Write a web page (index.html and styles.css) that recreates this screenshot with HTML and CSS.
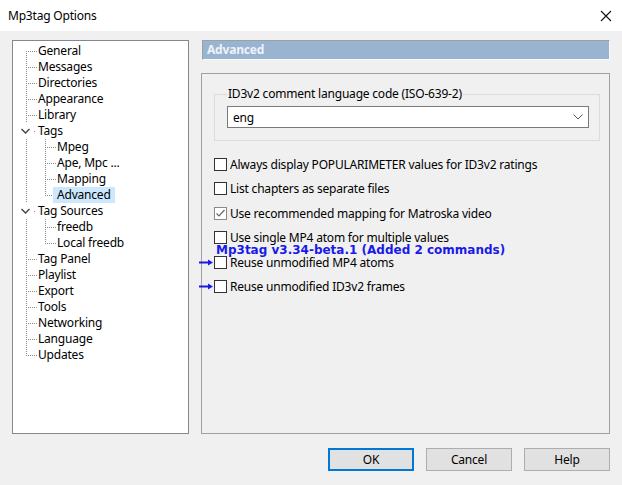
FILE: index.html
```html
<!DOCTYPE html>
<html lang="en">
<head>
    <meta charset="UTF-8">
    <title>Mp3tag Options</title>
    <link rel="stylesheet" href="styles.css">
</head>
<body>
    <div class="window">
        <div class="titlebar">
            <span class="title">Mp3tag Options</span>
            <svg class="close" width="12" height="12" viewBox="0 0 12 12">
                <path d="M1 1 L11 11 M11 1 L1 11" stroke="#111" stroke-width="1.1" fill="none"/>
            </svg>
        </div>

        <div class="client">
            <div class="main">
                <!-- tree on the left -->
                <div class="tree">
                    <div class="row"><i class="g g-first"></i><span class="item">General</span></div>
                    <div class="row"><i class="g g-tee"></i><span class="item">Messages</span></div>
                    <div class="row"><i class="g g-tee"></i><span class="item">Directories</span></div>
                    <div class="row"><i class="g g-tee"></i><span class="item">Appearance</span></div>
                    <div class="row"><i class="g g-tee"></i><span class="item">Library</span></div>
                    <div class="row">
                        <i class="g g-twisty">
                            <svg width="19" height="16" viewBox="0 0 19 16"><path d="M2.5 6 L6.5 10 L10.5 6" stroke="#444" stroke-width="1.4" fill="none"/><rect x="15" y="8" width="1" height="1" fill="#8a8a8a"/></svg>
                        </i><span class="item">Tags</span>
                    </div>
                    <div class="row"><i class="g g-line"></i><i class="g g-tee"></i><span class="item">Mpeg</span></div>
                    <div class="row"><i class="g g-line"></i><i class="g g-tee"></i><span class="item">Ape, Mpc ...</span></div>
                    <div class="row"><i class="g g-line"></i><i class="g g-tee"></i><span class="item">Mapping</span></div>
                    <div class="row"><i class="g g-line"></i><i class="g g-last"></i><span class="item selected">Advanced</span></div>
                    <div class="row">
                        <i class="g g-twisty">
                            <svg width="19" height="16" viewBox="0 0 19 16"><path d="M2.5 6 L6.5 10 L10.5 6" stroke="#444" stroke-width="1.4" fill="none"/><rect x="15" y="8" width="1" height="1" fill="#8a8a8a"/></svg>
                        </i><span class="item">Tag Sources</span>
                    </div>
                    <div class="row"><i class="g g-line"></i><i class="g g-tee"></i><span class="item">freedb</span></div>
                    <div class="row"><i class="g g-line"></i><i class="g g-last"></i><span class="item">Local freedb</span></div>
                    <div class="row"><i class="g g-tee"></i><span class="item">Tag Panel</span></div>
                    <div class="row"><i class="g g-tee"></i><span class="item">Playlist</span></div>
                    <div class="row"><i class="g g-tee"></i><span class="item">Export</span></div>
                    <div class="row"><i class="g g-tee"></i><span class="item">Tools</span></div>
                    <div class="row"><i class="g g-tee"></i><span class="item">Networking</span></div>
                    <div class="row"><i class="g g-tee"></i><span class="item">Language</span></div>
                    <div class="row"><i class="g g-last"></i><span class="item">Updates</span></div>
                </div>

                <!-- settings page -->
                <div class="page">
                    <div class="page-head">Advanced</div>
                    <div class="panel">
                        <fieldset class="group">
                            <legend>ID3v2 comment language code (ISO-639-2)</legend>
                            <div class="combo">
                                <span>eng</span>
                                <svg width="10" height="6" viewBox="0 0 10 6"><path d="M0.5 0.5 L5 5 L9.5 0.5" stroke="#555" stroke-width="1" fill="none"/></svg>
                            </div>
                        </fieldset>

                        <div class="options">
                            <div class="opt"><span class="box"></span><span class="text">Always display POPULARIMETER values for ID3v2 ratings</span></div>
                            <div class="opt"><span class="box"></span><span class="text">List chapters as separate files</span></div>
                            <div class="opt">
                                <span class="box checked"><svg width="11" height="11" viewBox="0 0 11 11"><path d="M1.5 5.5 L4 8 L9.5 2" stroke="#666" stroke-width="1.2" fill="none"/></svg></span>
                                <span class="text">Use recommended mapping for Matroska video</span>
                            </div>
                            <div class="opt"><span class="box"></span><span class="text">Use single MP4 atom for multiple values</span></div>
                            <div class="note"><span>Mp3tag v3.34-beta.1 (Added 2 commands)</span></div>
                            <div class="opt">
                                <svg class="arrow" width="15" height="7" viewBox="0 0 15 7"><path d="M0 3.5 H10" stroke="#1a1ae8" stroke-width="2"/><path d="M9 0.5 L14 3.5 L9 6.5 Z" fill="#1a1ae8"/></svg>
                                <span class="box"></span><span class="text">Reuse unmodified MP4 atoms</span>
                            </div>
                            <div class="opt">
                                <svg class="arrow" width="15" height="7" viewBox="0 0 15 7"><path d="M0 3.5 H10" stroke="#1a1ae8" stroke-width="2"/><path d="M9 0.5 L14 3.5 L9 6.5 Z" fill="#1a1ae8"/></svg>
                                <span class="box"></span><span class="text">Reuse unmodified ID3v2 frames</span>
                            </div>
                        </div>
                    </div>
                </div>
            </div>

            <div class="buttons">
                <button type="button" class="btn default">OK</button>
                <button type="button" class="btn">Cancel</button>
                <button type="button" class="btn">Help</button>
            </div>
        </div>
    </div>
</body>
</html>
```

FILE: styles.css
```css
body {
    margin: 0;
    font-family: "Noto Sans", "Open Sans", sans-serif;
    font-size: 12px;
    letter-spacing: -0.2px;
    color: #000;
    background-color: #f0f0f0;
}
.window {
    width: 622px;
    height: 485px;
    background-color: #f0f0f0;
}
.titlebar {
    height: 31px;
    background-color: white;
    display: flex;
    align-items: center;
    justify-content: space-between;
    padding: 0 10px 0 8px;
    box-sizing: border-box;
}
.title {
    font-size: 12px;
    margin-top: -1px;
}
.client {
    padding: 9px 12px 0 12px;
}
.main {
    display: flex;
    gap: 12px;
    height: 394px;
}

/* tree */
.tree {
    width: 177px;
    box-sizing: border-box;
    border: 1px solid #828790;
    background-color: white;
    padding: 2px 0 0 6px;
}
.row {
    display: flex;
    height: 16px;
    line-height: 16px;
    white-space: nowrap;
}
.g {
    flex: none;
    width: 19px;
    height: 16px;
    background-repeat: no-repeat;
}
.g-line {
    background-image: repeating-linear-gradient(to bottom, #8a8a8a 0 1px, transparent 1px 2px);
    background-size: 1px 16px;
    background-position: 7px 0;
}
.g-tee {
    background-image: repeating-linear-gradient(to bottom, #8a8a8a 0 1px, transparent 1px 2px),
                      repeating-linear-gradient(to right, #8a8a8a 0 1px, transparent 1px 2px);
    background-size: 1px 16px, 10px 1px;
    background-position: 7px 0, 9px 8px;
}
.g-first {
    background-image: repeating-linear-gradient(to bottom, #8a8a8a 0 1px, transparent 1px 2px),
                      repeating-linear-gradient(to right, #8a8a8a 0 1px, transparent 1px 2px);
    background-size: 1px 8px, 10px 1px;
    background-position: 7px 8px, 9px 8px;
}
.g-last {
    background-image: repeating-linear-gradient(to bottom, #8a8a8a 0 1px, transparent 1px 2px),
                      repeating-linear-gradient(to right, #8a8a8a 0 1px, transparent 1px 2px);
    background-size: 1px 9px, 10px 1px;
    background-position: 7px 0, 9px 8px;
}
.g-twisty svg {
    display: block;
}
.item {
    padding: 0 4px;
    margin-left: -4px;
}
.item.selected {
    background-color: #cce8ff;
}

/* right page */
.page {
    flex: 1;
    display: flex;
    flex-direction: column;
}
.page-head {
    height: 20px;
    box-sizing: border-box;
    border: 1px solid;
    border-color: #a0a0a0 #f8f8f8 #f8f8f8 #a0a0a0;
    background-color: #99b4d1;
    color: #eef2f7;
    font-weight: bold;
    line-height: 18px;
    padding-left: 4px;
    margin-left: 1px;
}
.panel {
    flex: 1;
    margin-top: 13px;
    border: 1px solid #a0a0a0;
    padding: 12px 9px 0 12px;
}
.group {
    margin: 0;
    border: 1px solid #dcdcdc;
    padding: 4px 10px 12px 12px;
}
.group legend {
    padding: 0 1px;
    line-height: 16px;
}
.combo {
    height: 22px;
    box-sizing: border-box;
    border: 1px solid #7a7a7a;
    background-color: white;
    display: flex;
    align-items: center;
    justify-content: space-between;
    padding: 0 5px 0 5px;
}
.options {
    margin-top: 11px;
    display: flex;
    flex-direction: column;
}
.opt {
    display: flex;
    align-items: center;
    height: 24.5px;
    white-space: nowrap;
}
.box {
    flex: none;
    width: 13px;
    height: 13px;
    box-sizing: border-box;
    border: 1px solid #333;
    background-color: white;
    display: flex;
    align-items: center;
    justify-content: center;
}
.box.checked {
    border-color: #8a8a8a;
}
.text {
    margin-left: 3px;
}
.arrow {
    flex: none;
    margin-left: -15px;
}
.note {
    height: 0;
}
.note span {
    display: block;
    transform: translateY(-7px);
    margin-left: 2px;
    font-family: "DejaVu Sans", Verdana, sans-serif;
    font-weight: bold;
    font-size: 12px;
    letter-spacing: 0;
    line-height: 14px;
    color: #1a1ae8;
    white-space: nowrap;
}

/* bottom buttons */
.buttons {
    display: flex;
    justify-content: flex-end;
    gap: 12px;
    margin-top: 14px;
}
.btn {
    width: 86px;
    height: 23px;
    font-family: "Noto Sans", "Open Sans", sans-serif;
    font-size: 12px;
    letter-spacing: -0.2px;
    color: #000;
    background-color: #e1e1e1;
    border: 1px solid #adadad;
    padding: 0;
}
.btn.default {
    border: 2px solid #0078d7;
}
```
